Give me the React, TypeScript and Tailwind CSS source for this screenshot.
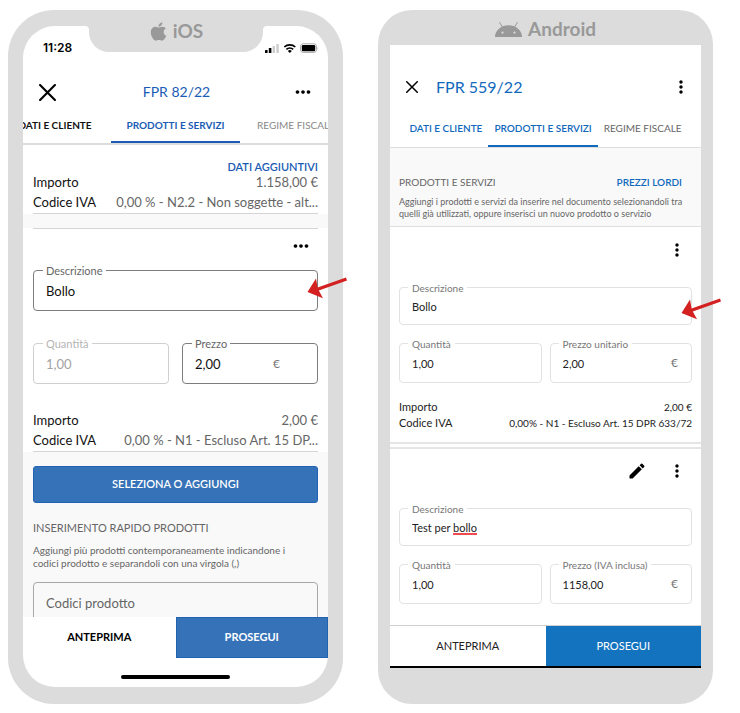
import { useId } from "react";
import type { ReactNode } from "react";
import clsx from "clsx";
import { FaApple } from "react-icons/fa";
import { MdEdit, MdMoreHoriz, MdMoreVert } from "react-icons/md";

type FieldProps = {
  label: string;
  value: string;
  className: string;
  labelClass: string;
  inputClass: string;
  disabled?: boolean;
  suffix?: ReactNode;
  children?: ReactNode;
};

/* Outlined text box, the label sits on the top border */
function Field({ label, value, className, labelClass, inputClass, disabled, suffix, children }: FieldProps) {
  const id = useId();
  return (
    <div className={clsx("relative flex min-w-0 flex-1 items-center border", className)}>
      <label htmlFor={id} className={clsx("absolute -top-2 bg-white leading-4 whitespace-nowrap", labelClass)}>
        {label}
      </label>
      <input
        id={id}
        type="text"
        defaultValue={value}
        disabled={disabled}
        className={clsx("h-full w-full min-w-0 bg-transparent outline-none", inputClass)}
      />
      {suffix}
      {children}
    </div>
  );
}

function IosField({ label, value, disabled, suffix, children }: Partial<FieldProps>) {
  return (
    <Field
      label={label ?? ""}
      value={value ?? ""}
      disabled={disabled}
      className={clsx("h-[41px] rounded", disabled ? "border-[#cfcfcf]" : "border-[#7d7d7d]")}
      labelClass={clsx("left-[9px] px-[3px] text-[11px]", disabled ? "text-[#b5b5b5]" : "text-[#666]")}
      inputClass={clsx("pl-3 text-[13px]", disabled ? "text-[#a3a3a3]" : "text-[#111]")}
      suffix={suffix}
    >
      {children}
    </Field>
  );
}

function AndroidField({ label, value, suffix, tall, children }: Partial<FieldProps> & { tall?: boolean }) {
  return (
    <Field
      label={label ?? ""}
      value={value ?? ""}
      className={clsx("rounded border-[#e2e2e2]", tall ? "h-10" : "h-[38px]")}
      labelClass="left-2 px-1 text-[10px] text-[#777]"
      inputClass="pl-3 text-[11px] text-[#222]"
      suffix={suffix}
    >
      {children}
    </Field>
  );
}

function Arrow({ className }: { className: string }) {
  return (
    <svg className={clsx("pointer-events-none absolute", className)} width="41" height="23" viewBox="0 0 41 23" aria-hidden="true">
      <path d="M0.5 15 L9 1.5 L10.6 10.4 L39 0.5 L40 3.6 L11.8 13.5 L16 21.2 Z" fill="#d32020" />
    </svg>
  );
}

function Cross({ size, stroke }: { size: number; stroke: number }) {
  return (
    <svg width={size} height={size} viewBox="0 0 16 16" fill="none" stroke="#000" strokeWidth={stroke} strokeLinecap="round" aria-hidden="true">
      <path d="M1 1 L15 15 M15 1 L1 15" />
    </svg>
  );
}

function AndroidHead() {
  return (
    <svg width="27" height="15" viewBox="0 0 27 15" aria-hidden="true">
      <path d="M4.6 0.5 L7.8 5.6 M22.4 0.5 L19.2 5.6" stroke="#999" strokeWidth="1" strokeLinecap="round" />
      <path d="M0 15 A13.5 11.8 0 0 1 27 15 Z" fill="#999" />
      <circle cx="7.5" cy="10.6" r="1.1" fill="#dcdcdc" />
      <circle cx="19.5" cy="10.6" r="1.1" fill="#dcdcdc" />
    </svg>
  );
}

function StatusIcons() {
  return (
    <svg width="54" height="10" viewBox="0 0 54 10" aria-hidden="true">
      <rect x="0" y="7" width="2.6" height="3" rx="0.6" fill="#000" />
      <rect x="3.8" y="5" width="2.6" height="5" rx="0.6" fill="#000" />
      <rect x="7.6" y="3" width="2.4" height="7" rx="0.6" fill="#ccc" />
      <rect x="11.4" y="1" width="2.4" height="9" rx="0.6" fill="#ccc" />
      <g fill="none" stroke="#000" strokeWidth="1.7">
        <path d="M19.3 4 A8 8 0 0 1 30.3 4" />
        <path d="M21.4 6.4 A5 5 0 0 1 28.2 6.4" />
      </g>
      <path d="M22.8 7.9 A3 3 0 0 1 26.8 7.9 L24.8 9.9 Z" fill="#000" />
      <rect x="35.5" y="0.8" width="16" height="8.6" rx="2.6" fill="none" stroke="#aaa" />
      <rect x="36.8" y="2" width="13.4" height="6.3" rx="1.3" fill="#000" />
      <path d="M52.6 3.8 Q54 5.2 52.6 6.7 Z" fill="#999" />
    </svg>
  );
}

function IosTotals({ importo, iva }: { importo: string; iva: string }) {
  return (
    <dl className="flex flex-col gap-1 border-b border-[#d5d5d5] pb-[3px] text-[13px] leading-4 text-[#666]">
      <div className="flex justify-between">
        <dt className="text-[#111]">Importo</dt>
        <dd>{importo}</dd>
      </div>
      <div className="flex justify-between whitespace-nowrap">
        <dt className="text-[#111]">Codice IVA</dt>
        <dd>{iva}</dd>
      </div>
    </dl>
  );
}

function IosPhone() {
  const tabs = [
    { name: "DATI E CLIENTE", style: "w-28 border-transparent font-bold text-[#111]" },
    { name: "PRODOTTI E SERVIZI", style: "w-[129px] border-[#1a5cb5] font-bold text-[#1a5cb5]" },
    { name: "REGIME FISCALE", style: "w-28 border-transparent text-[#888]" },
  ];

  return (
    <section className="relative min-w-0 rounded-[46px] bg-[#dcdcdc] px-[15px] pt-4 pb-[17px]">
      {/* notch, drawn over the top of the screen */}
      <div className="absolute inset-x-0 top-0 flex justify-center">
        <div className="relative flex h-[42px] w-[174px] items-center justify-center gap-1 rounded-b-[20px] bg-[#dcdcdc] text-[#999]">
          <svg className="absolute top-4 -left-1" width="4" height="4" aria-hidden="true"><path d="M0 0 H4 V4 Q4 0 0 0" fill="#dcdcdc" /></svg>
          <svg className="absolute top-4 -right-1" width="4" height="4" aria-hidden="true"><path d="M4 0 H0 V4 Q0 0 4 0" fill="#dcdcdc" /></svg>
          <FaApple size={21} />
          <span className="text-[19px] leading-5 font-bold">iOS</span>
        </div>
      </div>

      <div className="rounded-[32px] bg-white pb-2">
        <div className="flex h-11 items-center justify-between pr-[9px] pl-5">
          <span className="font-['Inter'] text-xs font-semibold">11:28</span>
          <StatusIcons />
        </div>
        <header className="flex h-11 items-center justify-between pr-[14px] pl-4">
          <button aria-label="Chiudi" className="w-[22px]"><Cross size={17} stroke={2} /></button>
          <h1 className="text-sm text-[#1a5cb5]">FPR 82/22</h1>
          <button aria-label="Altro"><MdMoreHoriz size={22} /></button>
        </header>
        <nav className="flex justify-center overflow-hidden border-b-2 border-[#dcdcdc]">
          {tabs.map((tab) => (
            <button key={tab.name} className={clsx("shrink-0 border-b-2 pt-[3px] pb-2 text-[10px] leading-4 whitespace-nowrap", tab.style)}>
              {tab.name}
            </button>
          ))}
        </nav>

        <div className="px-[10px] pt-[14px]">
          <div className="flex justify-end">
            <button className="text-[11px] leading-[15px] font-semibold text-[#1a5cb5]">DATI AGGIUNTIVI</button>
          </div>
          <IosTotals importo="1.158,00 €" iva="0,00 % - N2.2 - Non soggette - alt..." />
        </div>
        <div className="h-[14px] bg-[#f9f9f9]" />

        <div className="px-[10px]">
          <div className="flex h-[42px] items-center justify-end border-t border-[#d5d5d5] pr-[6px] pb-2">
            <button aria-label="Altro"><MdMoreHoriz size={22} /></button>
          </div>
          <div className="flex">
            <IosField label="Descrizione" value="Bollo">
              <Arrow className="top-[6px] -right-[31px]" />
            </IosField>
          </div>
          <div className="mt-8 mb-7 flex gap-[13px]">
            <IosField label="Quantità" value="1,00" disabled />
            <IosField label="Prezzo" value="2,00" suffix={<span className="pr-[37px] text-xs text-[#777]">€</span>} />
          </div>
          <IosTotals importo="2,00 €" iva="0,00 % - N1 - Escluso Art. 15 DP..." />
        </div>

        <div className="bg-[#f9f9f9] px-[10px] pt-[14px] text-[#666]">
          <button className="h-[37px] w-full rounded-[3px] border border-[#2163b3] bg-[#3672b8] text-[11px] font-semibold text-white">
            SELEZIONA O AGGIUNGI
          </button>
          <h2 className="mt-[17px] text-[11px] leading-4">INSERIMENTO RAPIDO PRODOTTI</h2>
          <p className="mt-2 text-[10px] leading-[13px]">
            Aggiungi più prodotti contemporaneamente indicandone i<br />
            codici prodotto e separandoli con una virgola (,)
          </p>
          {/* scrolled under the bottom bar */}
          <div className="mt-3 h-[35px] overflow-hidden">
            <input
              type="text"
              aria-label="Codici prodotto"
              placeholder="Codici prodotto"
              className="h-[41px] w-full rounded border border-[#a8a8a8] bg-transparent px-3 text-[13px] outline-none placeholder:text-[#666]"
            />
          </div>
        </div>

        <footer className="grid grid-cols-2 text-[11px] font-bold">
          <button className="h-[41px]">ANTEPRIMA</button>
          <button className="h-[41px] border border-[#2163b3] bg-[#3672b8] text-white">PROSEGUI</button>
        </footer>
        <div className="mx-auto mt-[17px] h-1 w-[109px] rounded-full bg-black" />
      </div>
    </section>
  );
}

function AndroidPhone() {
  const tabs = [
    { name: "DATI E CLIENTE", style: "border-transparent font-semibold text-[#1069bd]" },
    { name: "PRODOTTI E SERVIZI", style: "border-[#1069bd] font-semibold text-[#1069bd]" },
    { name: "REGIME FISCALE", style: "border-transparent text-[#666]" },
  ];
  const euro = <span className="pr-[13px] text-xs text-[#777]">€</span>;

  return (
    <section className="min-w-0 rounded-[34px] bg-[#dcdcdc] px-3 pb-9">
      <div className="flex h-[35px] items-center justify-center gap-[6px] pt-[3px] text-[#999]">
        <AndroidHead />
        <span className="text-[19px] leading-5 font-bold">Android</span>
      </div>

      <div className="border-b-2 border-black bg-white">
        <header className="flex items-center gap-[18px] pt-5 pr-[10px] pl-4">
          <button aria-label="Chiudi"><Cross size={12} stroke={2} /></button>
          <h1 className="flex-1 text-base leading-[44px] text-[#1069bd]">FPR 559/22</h1>
          <button aria-label="Altro"><MdMoreVert size={20} /></button>
        </header>
        <nav className="flex justify-center border-b border-[#dedede]">
          {tabs.map((tab) => (
            <button key={tab.name} className={clsx("border-b-2 px-[6px] pt-[11px] pb-[9px] text-[10px] leading-4 whitespace-nowrap", tab.style)}>
              {tab.name}
            </button>
          ))}
        </nav>

        <div className="border-b border-[#dedede] bg-[#f9f9f9] px-[9px] pt-[26px] pb-[6px] text-[#666]">
          <div className="flex items-center justify-between pr-[10px]">
            <h2 className="text-[10px] leading-4">PRODOTTI E SERVIZI</h2>
            <button className="text-[10px] leading-4 font-semibold text-[#1069bd]">PREZZI LORDI</button>
          </div>
          <p className="mt-[6px] text-[9px] leading-3">
            Aggiungi i prodotti e servizi da inserire nel documento selezionandoli tra quelli già utilizzati, oppure inserisci un nuovo prodotto o servizio
          </p>
        </div>

        <div className="border-b-2 border-[#e5e5e5] px-[9px] pt-[11px] pb-[11px]">
          <div className="mb-[25px] flex h-6 items-center justify-end pr-[5px]">
            <button aria-label="Altro"><MdMoreVert size={20} /></button>
          </div>
          <div className="flex">
            <AndroidField label="Descrizione" value="Bollo">
              <Arrow className="top-[10px] -right-[31px]" />
            </AndroidField>
          </div>
          <div className="mt-[18px] flex gap-2">
            <AndroidField label="Quantità" value="1,00" tall />
            <AndroidField label="Prezzo unitario" value="2,00" tall suffix={euro} />
          </div>
          <dl className="mt-4 text-[10px] leading-4 text-[#222]">
            <div className="flex justify-between">
              <dt className="text-[11px] leading-4">Importo</dt>
              <dd>2,00 €</dd>
            </div>
            <div className="flex justify-between whitespace-nowrap">
              <dt className="text-[11px] leading-4">Codice IVA</dt>
              <dd>0,00% - N1 - Escluso Art. 15 DPR 633/72</dd>
            </div>
          </dl>
        </div>

        <div className="mt-[3px] border-t-2 border-[#e5e5e5] px-[9px] pt-[10px] pb-[21px]">
          <div className="mb-[25px] flex h-6 items-center justify-end gap-5 pr-[5px]">
            <button aria-label="Modifica"><MdEdit size={20} /></button>
            <button aria-label="Altro"><MdMoreVert size={20} /></button>
          </div>
          <div className="flex">
            <AndroidField label="Descrizione" value="Test per bollo">
              {/* spell checker mark under the last word */}
              <span className="absolute top-6 left-[53px] h-[2px] w-6 bg-[#ee4a50]" />
            </AndroidField>
          </div>
          <div className="mt-[18px] flex gap-2">
            <AndroidField label="Quantità" value="1,00" tall />
            <AndroidField label="Prezzo (IVA inclusa)" value="1158,00" tall suffix={euro} />
          </div>
        </div>

        <footer className="grid grid-cols-2 border-t border-[#cfcfcf] text-[11px]">
          <button className="h-10 text-[#222]">ANTEPRIMA</button>
          <button className="h-10 bg-[#1473bf] text-white">PROSEGUI</button>
        </footer>
      </div>
    </section>
  );
}

export default function App() {
  return (
    <main className="grid grid-cols-2 items-start gap-[35px] bg-white pt-[10px] pr-[27px] pb-[9px] pl-2 font-['Lato',sans-serif] text-black">
      <IosPhone />
      <AndroidPhone />
    </main>
  );
}
